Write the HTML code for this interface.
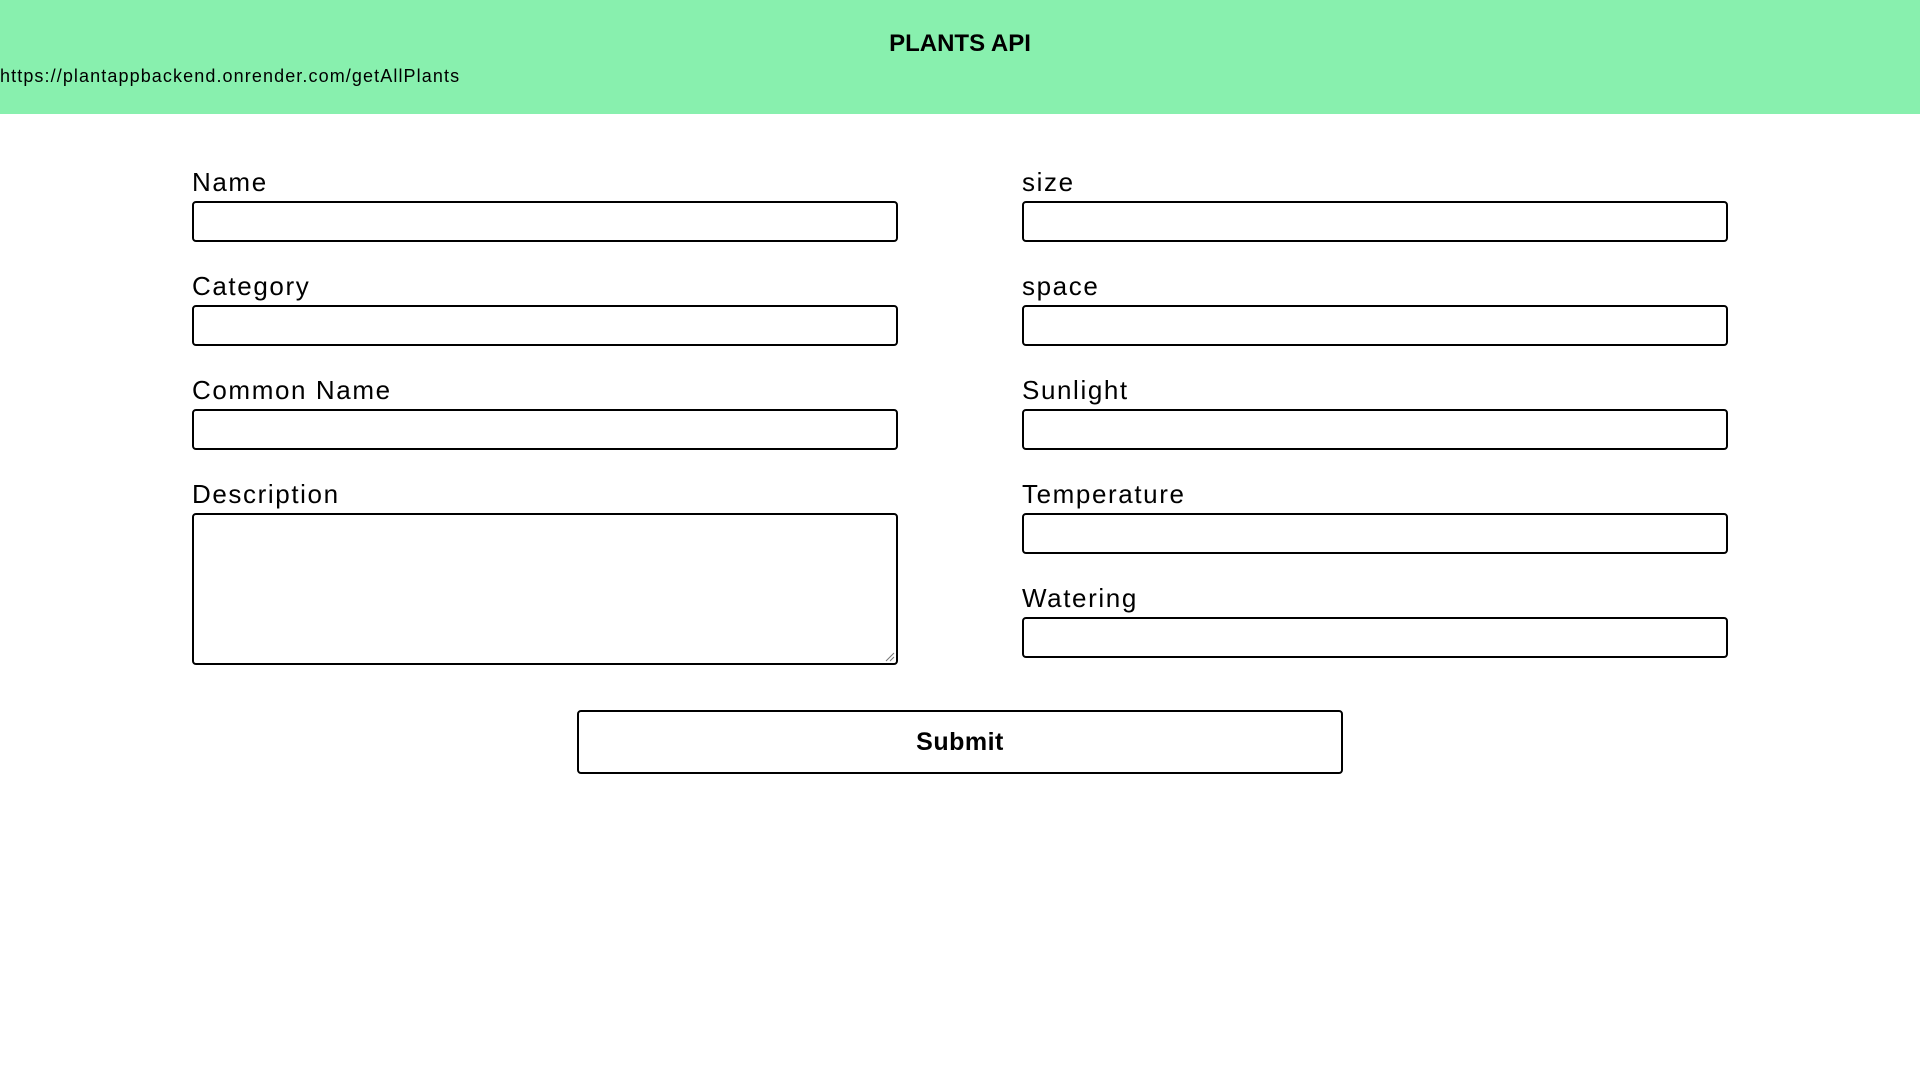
<!DOCTYPE html>
<html><head><meta charset="utf-8"><style>
*{box-sizing:border-box;margin:0;padding:0}
body{width:1920px;height:1080px;background:#fff;font-family:"Liberation Sans",sans-serif;color:#000;position:relative;overflow:hidden}
.hdr{position:absolute;left:0;top:0;width:1920px;height:114px;background:#88f0ae}
.title{position:absolute;top:30px;width:1920px;text-align:center;font-weight:bold;font-size:24px}
.url{position:absolute;left:0;top:66px;font-size:18px;letter-spacing:1.1px}
.lbl{position:absolute;font-size:26px;letter-spacing:1.6px}
.in{position:absolute;border:2px solid #000;border-radius:4px;height:41px;width:706px}
.btn{position:absolute;left:577px;top:710px;width:766px;height:64px;border:2px solid #000;border-radius:4px;text-align:center;line-height:60px;font-weight:bold;font-size:25px;letter-spacing:0.5px}
</style></head><body>
<div class="hdr"><div class="title">PLANTS API</div><div class="url">https://plantappbackend.onrender.com/getAllPlants</div></div>

<div class="lbl" style="left:192px;top:167px">Name</div>
<div class="in" style="left:192px;top:201px"></div>
<div class="lbl" style="left:192px;top:271px">Category</div>
<div class="in" style="left:192px;top:305px"></div>
<div class="lbl" style="left:192px;top:375px">Common Name</div>
<div class="in" style="left:192px;top:409px"></div>
<div class="lbl" style="left:192px;top:479px">Description</div>
<div class="in" style="left:192px;top:513px;height:152px"></div>
<svg style="position:absolute;left:884px;top:651px" width="12" height="12"><path d="M2 10L10 2M6 10L10 6" stroke="#777" stroke-width="1"/></svg>

<div class="lbl" style="left:1022px;top:167px">size</div>
<div class="in" style="left:1022px;top:201px"></div>
<div class="lbl" style="left:1022px;top:271px">space</div>
<div class="in" style="left:1022px;top:305px"></div>
<div class="lbl" style="left:1022px;top:375px">Sunlight</div>
<div class="in" style="left:1022px;top:409px"></div>
<div class="lbl" style="left:1022px;top:479px">Temperature</div>
<div class="in" style="left:1022px;top:513px"></div>
<div class="lbl" style="left:1022px;top:583px">Watering</div>
<div class="in" style="left:1022px;top:617px"></div>

<div class="btn">Submit</div>
</body></html>
